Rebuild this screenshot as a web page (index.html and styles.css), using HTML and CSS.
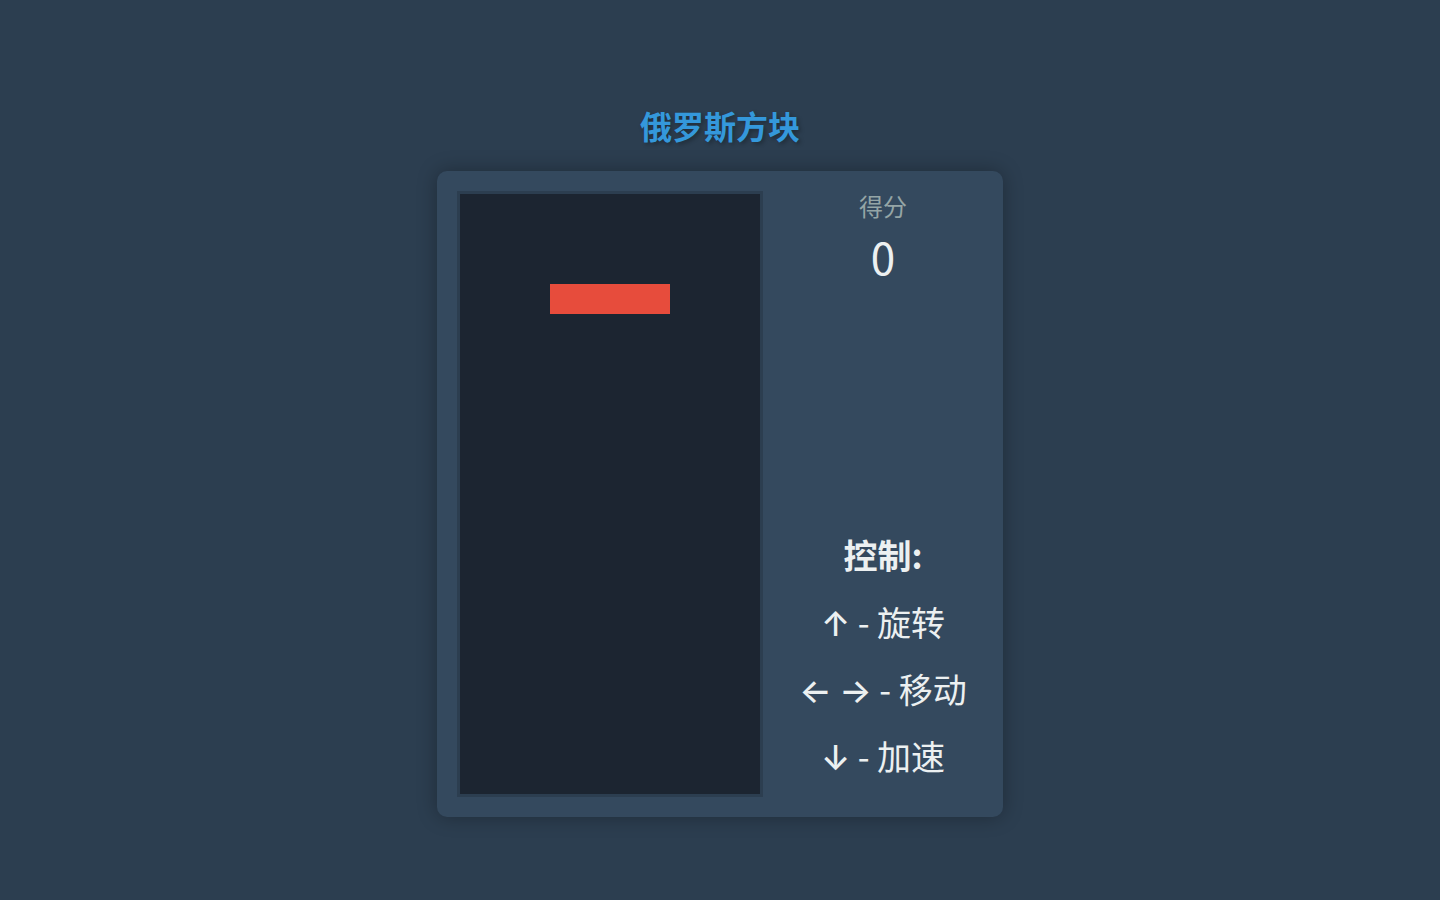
FILE: index.html
```html
<!DOCTYPE html>
<html lang="zh">
<head>
<meta charset="utf-8">
<title>俄罗斯方块</title>
<link rel="stylesheet" href="styles.css">
</head>
<body>
<main class="page">
  <h1 class="title">俄罗斯方块</h1>
  <div class="game">
    <div class="board">
      <div class="piece"></div>
    </div>
    <aside class="side">
      <div class="score">
        <div class="score-label">得分</div>
        <div class="score-value">0</div>
      </div>
      <div class="controls">
        <h3 class="controls-title">控制:</h3>
        <p class="control"><span class="arrow">↑</span> - 旋转</p>
        <p class="control"><span class="arrow">←</span> <span class="arrow">→</span> - 移动</p>
        <p class="control"><span class="arrow">↓</span> - 加速</p>
      </div>
    </aside>
  </div>
</main>
</body>
</html>
```

FILE: styles.css
```css
html, body {
  margin: 0;
  padding: 0;
}
body {
  background: #2c3e50;
  color: #ecf0f1;
  font-family: "Noto Sans CJK SC", "Noto Sans", sans-serif;
  min-height: 900px;
}
.page {
  display: flex;
  flex-direction: column;
  align-items: center;
  padding-top: 102px;
}
.title {
  margin: 0 0 23px;
  font-size: 32px;
  line-height: 46px;
  font-weight: 700;
  color: #3498db;
  text-shadow: 2px 2px 4px rgba(0, 0, 0, 0.3);
}
.game {
  display: flex;
  gap: 20px;
  padding: 20px;
  background: #34495e;
  border-radius: 10px;
  box-shadow: 0 0 20px rgba(0, 0, 0, 0.3);
}
.board {
  display: grid;
  grid-template-columns: repeat(10, 30px);
  grid-template-rows: repeat(20, 30px);
  border: 3px solid #2c3e50;
  background: #1c2531;
}
.piece {
  grid-column: 4 / 8;
  grid-row: 4;
  background: #e74c3c;
}
.side {
  width: 200px;
  display: flex;
  flex-direction: column;
  justify-content: space-between;
  align-items: center;
  text-align: center;
}
.score-label {
  font-size: 24px;
  line-height: 30px;
  color: #95a5a6;
}
.score-value {
  font-size: 44px;
  line-height: 56px;
  margin-top: 7px;
  color: #ecf0f1;
}
.controls {
  padding-bottom: 18px;
}
.controls-title {
  margin: 0;
  font-size: 34px;
  line-height: 46px;
  font-weight: 700;
}
.control {
  margin: 21px 0 0;
  font-size: 34px;
  line-height: 46px;
}
.arrow {
  font-family: Inter, "DejaVu Sans", sans-serif;
  font-weight: 500;
  line-height: 0;
}
```
